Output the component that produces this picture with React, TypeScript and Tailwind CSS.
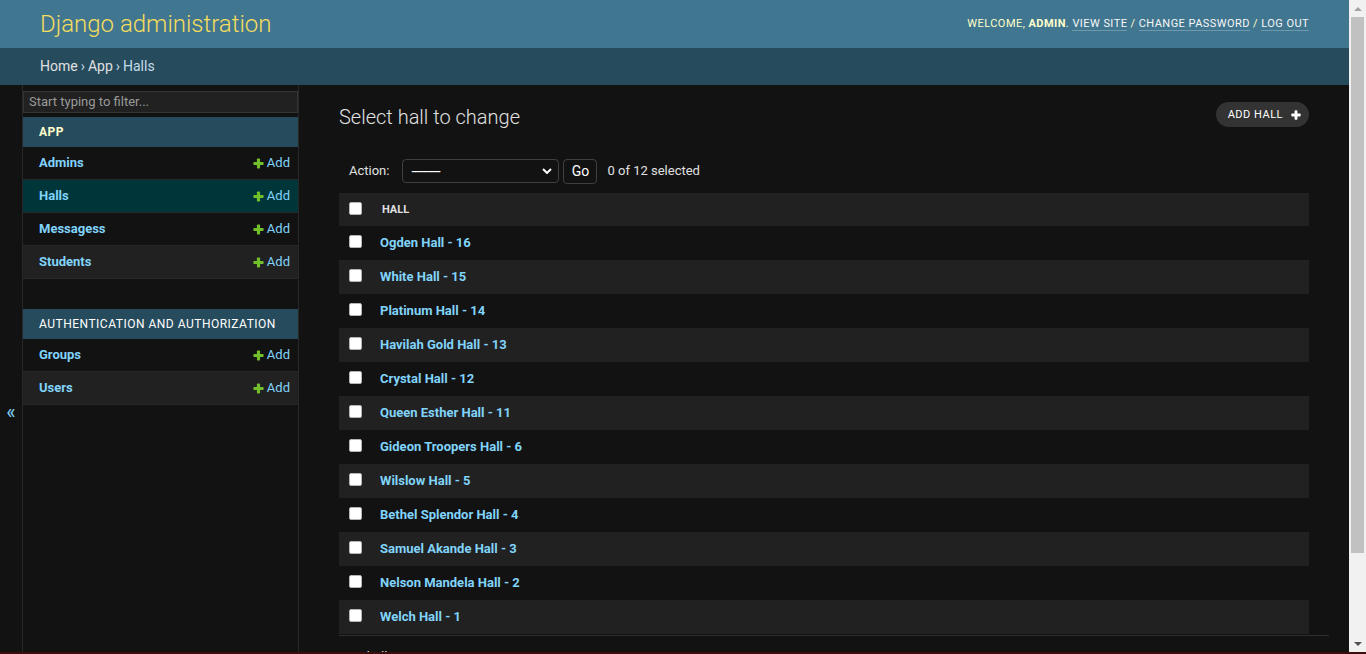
import * as React from "react"

const halls = [
    "Ogden Hall - 16",
    "White Hall - 15",
    "Platinum Hall - 14",
    "Havilah Gold Hall - 13",
    "Crystal Hall - 12",
    "Queen Esther Hall - 11",
    "Gideon Troopers Hall - 6",
    "Wilslow Hall - 5",
    "Bethel Splendor Hall - 4",
    "Samuel Akande Hall - 3",
    "Nelson Mandela Hall - 2",
    "Welch Hall - 1",
]

function PlusIcon({ className }: { className?: string }) {
    return (
        <svg viewBox="0 0 14 14" className={className} fill="currentColor">
            <rect x="5" y="0.5" width="4" height="13" rx="1" />
            <rect x="0.5" y="5" width="13" height="4" rx="1" />
        </svg>
    )
}

function Checkbox({ className = "" }: { className?: string }) {
    return <span className={`block h-[13px] w-[13px] shrink-0 rounded-[2px] border border-[#b5b5b5] bg-white ${className}`} />
}

function ModelRow({ name, stripe, selected }: { name: string; stripe?: boolean; selected?: boolean }) {
    const bg = selected ? "bg-[#00363a]" : stripe ? "bg-[#212121]" : "bg-[#121212]"
    return (
        <div className={`flex h-[33px] items-center justify-between border-b border-[#272727] pl-4 pr-2 text-[13px] ${bg}`}>
            <a href="#" className="font-bold text-[#81d4fa]">{name}</a>
            <a href="#" className="flex items-center gap-[3px] text-[#81d4fa]">
                <PlusIcon className="h-[11px] w-[11px] text-[#70bf2b]" />
                Add
            </a>
        </div>
    )
}

function Scrollbar() {
    return (
        <div className="flex w-[17px] shrink-0 flex-col bg-[#f1f1f1]">
            <div className="flex h-[17px] items-center justify-center">
                <svg viewBox="0 0 8 4" className="h-[4px] w-[8px] text-[#a3a3a3]" fill="currentColor">
                    <path d="M0 4 L4 0 L8 4 Z" />
                </svg>
            </div>
            <div className="mx-[2px] h-[536px] bg-[#c1c1c1]" />
            <div className="flex-1" />
            <div className="flex h-[17px] items-center justify-center">
                <svg viewBox="0 0 8 4" className="h-[4px] w-[8px] text-[#505050]" fill="currentColor">
                    <path d="M0 0 L8 0 L4 4 Z" />
                </svg>
            </div>
        </div>
    )
}

export default function App() {
    return (
        <div className="flex h-[654px] w-[1366px] flex-col overflow-hidden font-['Roboto',sans-serif]">
            <div className="flex min-h-0 flex-1">
                <div className="min-w-0 flex-1 overflow-hidden bg-[#121212]">
                    {/* header */}
                    <header className="flex h-12 items-center justify-between bg-[#417690] px-10">
                        <h1 className="text-2xl font-light text-[#f5dd5d]">Django administration</h1>
                        <div className="text-[11px] uppercase tracking-[0.45px] text-[#ffc]">
                            Welcome, <strong className="font-bold">admin</strong>.{" "}
                            <a href="#" className="border-b border-white/25 text-[#f7f7f7]">View site</a> /{" "}
                            <a href="#" className="border-b border-white/25 text-[#f7f7f7]">Change password</a> /{" "}
                            <a href="#" className="border-b border-white/25 text-[#f7f7f7]">Log out</a>
                        </div>
                    </header>

                    {/* breadcrumbs */}
                    <div className="flex h-[37px] items-center bg-[#264b5d] px-10 pb-[1px] text-sm text-[#c4dce8]">
                        <a href="#" className="text-[#e0e0e0]">Home</a>
                        <span className="mx-[3px]">›</span>
                        <a href="#" className="text-[#e0e0e0]">App</a>
                        <span className="mx-[3px]">›</span>
                        Halls
                    </div>

                    <div className="flex items-start">
                        <button className="flex h-[654px] w-[23px] shrink-0 items-center justify-center border-r border-[#272727] text-xl text-[#81d4fa]">
                            «
                        </button>

                        {/* sidebar */}
                        <nav className="h-[654px] w-[276px] shrink-0 border-r border-[#272727]">
                            <div className="mb-[4px] mt-[6px] flex h-[22px] items-center border border-[#353535] bg-[#212121] px-[5px] text-[13px] text-[#9a9a9a]">
                                Start typing to filter...
                            </div>

                            <div className="mb-[30px]">
                                <div className="flex h-[30px] items-center bg-[#264b5d] pl-4 text-[12px] font-bold uppercase tracking-[0.5px] text-[#ffc]">
                                    App
                                </div>
                                <ModelRow name="Admins" />
                                <ModelRow name="Halls" selected />
                                <ModelRow name="Messagess" />
                                <ModelRow name="Students" stripe />
                            </div>

                            <div>
                                <div className="flex h-[30px] items-center bg-[#264b5d] pl-4 text-[12px] uppercase tracking-[0.5px] text-white">
                                    Authentication and Authorization
                                </div>
                                <ModelRow name="Groups" />
                                <ModelRow name="Users" stripe />
                            </div>
                        </nav>

                        {/* content */}
                        <main className="min-w-0 flex-1 px-10 pt-5">
                            <div className="mb-5 flex items-start justify-between">
                                <h1 className="text-[20px] font-light leading-6 text-[#e0e0e0]">Select hall to change</h1>
                                <a href="#" className="-mt-[3px] flex h-[25px] items-center gap-2 rounded-full bg-[#333333] pl-3 pr-2 pt-[1px] text-[11px] uppercase tracking-[0.5px] text-white">
                                    Add hall
                                    <PlusIcon className="h-[10px] w-[10px] text-white" />
                                </a>
                            </div>

                            <div className="flex h-[44px] items-center px-[10px] text-[13px] text-[#e0e0e0]">
                                <span className="mr-[13px]">Action:</span>
                                <div className="flex h-[24px] w-[157px] items-center justify-between rounded-[4px] border border-[#3f3f3f] pl-[8px] pr-[6px] text-white">
                                    <span className="text-[15px] tracking-[-1px]">---------</span>
                                    <svg viewBox="0 0 10 6" className="h-[6px] w-[10px]" fill="none" stroke="currentColor" strokeWidth="2">
                                        <path d="M1 1 L5 5 L9 1" />
                                    </svg>
                                </div>
                                <button className="ml-1 flex h-[25px] w-[34px] items-center justify-center rounded-[4px] border border-[#3f3f3f] text-[14px] text-white">
                                    Go
                                </button>
                                <span className="ml-[10px]">0 of 12 selected</span>
                            </div>

                            <div>
                                <div className="flex h-[33px] items-center bg-[#212121] pl-[10px]">
                                    <Checkbox className="-mt-[2px]" />
                                    <span className="ml-[20px] mt-[2px] text-[11px] font-bold uppercase text-[#e0e0e0]">Hall</span>
                                </div>
                                {halls.map((hall, i) => (
                                    <div
                                        key={hall}
                                        className={`flex h-[34px] items-center pl-[10px] ${i % 2 === 1 ? "bg-[#212121]" : "bg-[#121212]"}`}
                                    >
                                        <Checkbox className="-mt-[3px]" />
                                        <a href="#" className="ml-[18px] text-[13px] font-bold text-[#81d4fa]">{hall}</a>
                                    </div>
                                ))}
                            </div>

                            <div className="-mr-5 mt-[1px] border-t border-[#2f2f2f] py-[10px] pl-[10px] text-[13px] leading-[22px] text-[#e0e0e0]">
                                12 halls
                            </div>
                        </main>
                    </div>
                </div>
                <Scrollbar />
            </div>
            <div className="h-[2px] shrink-0 bg-[#3d0c0c]" />
        </div>
    )
}
